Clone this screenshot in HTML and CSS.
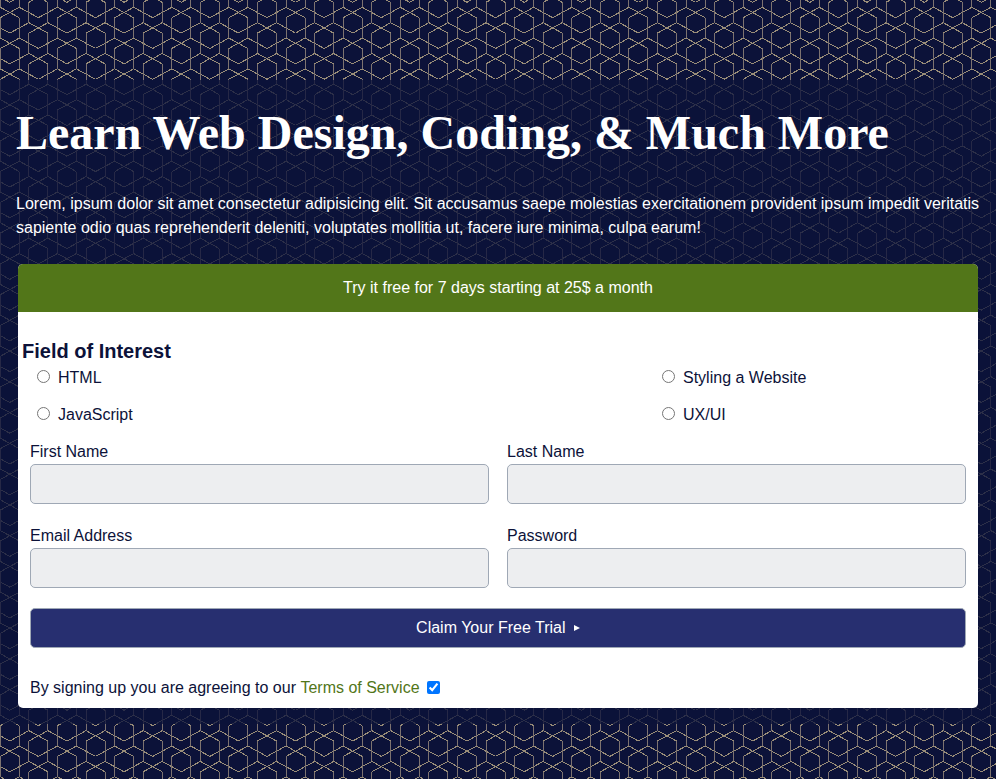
FILE: index.html
```html
<!DOCTYPE html>
<html lang="en">
<head>
<meta charset="utf-8">
<title>Learn Web Design</title>
<link rel="stylesheet" href="styles.css">
</head>
<body>
<svg class="pattern" aria-hidden="true">
  <path class="slopes"/>
  <path class="sides"/>
</svg>
<main>
  <h1>Learn Web Design, Coding, &amp; Much More</h1>
  <p class="intro">Lorem, ipsum dolor sit amet consectetur adipisicing elit. Sit accusamus saepe molestias exercitationem provident ipsum impedit veritatis sapiente odio quas reprehenderit deleniti, voluptates mollitia ut, facere iure minima, culpa earum!</p>
  <form class="card">
    <div class="banner">Try it free for 7 days starting at 25$ a month</div>
    <h2>Field of Interest</h2>
    <div class="choices">
      <label><input type="radio" name="field">HTML</label>
      <label><input type="radio" name="field">Styling a Website</label>
      <label><input type="radio" name="field">JavaScript</label>
      <label><input type="radio" name="field">UX/UI</label>
    </div>
    <div class="fields">
      <label>First Name<input type="text"></label>
      <label>Last Name<input type="text"></label>
      <label>Email Address<input type="email"></label>
      <label>Password<input type="password"></label>
    </div>
    <button type="button">Claim Your Free Trial <svg width="6" height="6" viewBox="0 0 6 6" aria-hidden="true"><path d="M0 0L6 3L0 6Z" fill="#fff"/></svg></button>
    <div class="terms">By signing up you are agreeing to our <a>Terms of Service</a><input type="checkbox" checked></div>
  </form>
</main>
<script src="pattern.js"></script>
</body>
</html>
```
FILE: styles.css
```css
* { box-sizing: border-box; }
body { margin: 0; height: 779px; padding-top: 80px; overflow: hidden; background: #0c1239; color: #0c1239; font: 16px/24px "Liberation Sans", Arial, sans-serif; }
.pattern { position: absolute; inset: 0; width: 100%; height: 100%; z-index: -1; shape-rendering: crispEdges; }
.pattern path { fill: none; stroke: #998d78; stroke-width: 1; }
.pattern .sides { stroke: #7d7370; }
main { height: 644px; padding: 23px 16px 0; background: rgba(12, 18, 57, .77); }
h1 { margin: 0; color: #fff; font: bold 48px/60px "Liberation Serif", "Times New Roman", serif; white-space: nowrap; }
.intro { margin: 29px 0 24px; color: #fff; }
.card { height: 444px; margin: 0 2px; border-radius: 5px; overflow: hidden; background: #fff; }
.banner { height: 48px; line-height: 47px; text-align: center; color: #fff; background: #527619; }
h2 { margin: 27px 0 0 4px; font-size: 20px; line-height: 24px; }
.choices { display: grid; grid-template-columns: 625px 1fr; grid-auto-rows: 37px; padding-left: 19px; margin-top: 3px; }
.choices label { display: flex; align-items: flex-start; }
.choices input { width: 13px; height: 13px; margin: 4px 8px 0 0; }
.fields { display: grid; grid-template-columns: 1fr 1fr; gap: 20px 18px; padding: 0 12px; }
.fields label { height: 64px; }
.fields input { display: block; width: 100%; height: 40px; border: 1px solid #9fa8b5; border-radius: 5px; background: #edeef0; }
button { display: block; width: 936px; height: 40px; margin: 20px 12px 28px; padding: 0 0 1px; border: 1px solid #9fa8b5; border-radius: 5px; background: #272f70; color: #fff; font: inherit; }
button svg { margin-left: 4px; vertical-align: 2px; }
.terms { display: flex; margin-left: 12px; white-space: pre; }
.terms a { color: #527619; }
.terms input { width: 13px; height: 13px; margin: 5px 0 0 7px; }
```
FILE: pattern.js
```js
// Interlocking hexagons: each cell has a crossing, two sides and the zigzag to its right.
const stepX = 28.573;
const stepY = 30.78;
let slopes = "";
let sides = "";
for (let col = -1; col < 36; col++) {
  const x = 9.8 + col * stepX;
  for (let row = -2; row < 27; row++) {
    const y = 12.5 + row * stepY + (col % 2 ? stepY / 2 : 0);
    slopes += `M${x - 9.5} ${y + 5.2}L${x + 9.5} ${y - 5.2}L${x + stepX} ${y + 5.2}`;
    slopes += `M${x + 9.5} ${y + 5.2}L${x - 9.5} ${y - 5.2}L${x - stepX} ${y + 5.2}`;
    sides += `M${x - 9.5} ${y + 5.2}v20.4M${x + 9.5} ${y + 5.2}v20.4`;
  }
}
document.querySelector(".slopes").setAttribute("d", slopes);
document.querySelector(".sides").setAttribute("d", sides);
```
